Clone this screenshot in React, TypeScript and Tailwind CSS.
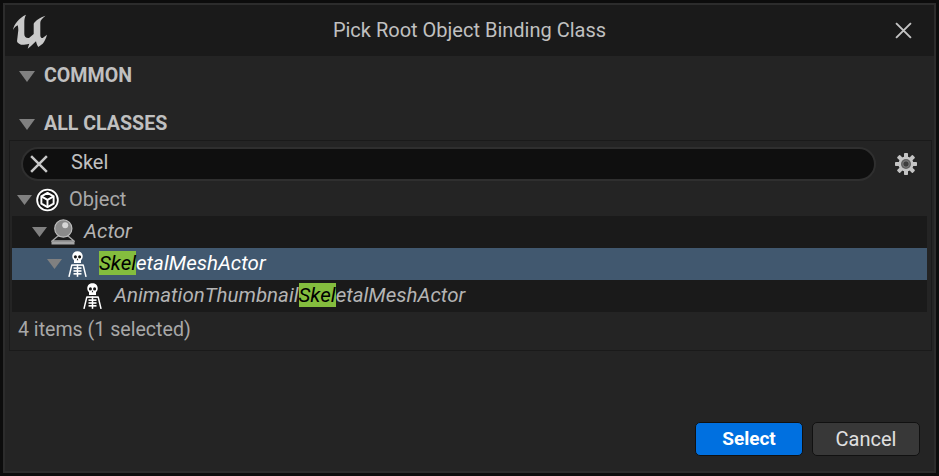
const FONT = "font-['Roboto','Liberation_Sans',sans-serif]";

const Caret = ({ big = false }: { big?: boolean }) => (
  <svg width={big ? 16 : 15} height={big ? 11 : 10} viewBox="0 0 16 10" preserveAspectRatio="none" className="shrink-0">
    <path d="M0 0H16L8 10Z" fill="#808080" />
  </svg>
);

const UnrealLogo = () => (
  <svg width="36" height="36" viewBox="11 11 36 36" className="shrink-0">
    <path
      d="M12 28C13 22 18 16 25 12.7C23.5 15.5 23.3 18 23.3 20V32C23.3 35 25.5 36.5 28 36L32.7 32V21.7C34.5 18.5 39 15.5 44.5 13.7C41 16.5 39.3 18.5 39.3 20.7V33C39.3 35.5 40.5 36.3 41.7 36L46 32.7C45 36.5 43.5 39.5 41.7 41.7L37.3 45C36 43 35.3 41 35 39.3L30 44L26.7 46.8C27 45 27.8 43.3 28.3 41.7C25 42.8 22 42.8 20 42.7C18 42 16.5 41 16 39.3L17.3 28.3C17.3 26 17 24.5 16.7 23.3C15 24 13 26 12 28Z"
      fill="#c9c9c9"
    />
  </svg>
);

const XIcon = ({ size, width, color }: { size: number; width: number; color: string }) => (
  <svg width={size} height={size} viewBox="0 0 16 16" className="shrink-0">
    <path d="M1 1L15 15M15 1L1 15" stroke={color} strokeWidth={width} fill="none" />
  </svg>
);

const GearIcon = () => (
  <svg width="22" height="22" viewBox="0 0 22 22" className="shrink-0">
    <g fill="#c4c4c4">
      {[0, 45, 90, 135, 180, 225, 270, 315].map((a) => (
        <rect key={a} x="9" y="0" width="4" height="5" rx="0.8" transform={`rotate(${a} 11 11)`} />
      ))}
    </g>
    <circle cx="11" cy="11" r="7.6" fill="#c4c4c4" />
    <circle cx="11" cy="11" r="5" fill="#5f5f5f" />
    <circle cx="11" cy="11" r="3.2" fill="#3d3d3d" stroke="#8a8a8a" strokeWidth="0.8" />
  </svg>
);

const CubeIcon = () => (
  <svg width="23" height="24" viewBox="0 0 24 24" className="shrink-0">
    <circle cx="12" cy="12" r="10.8" fill="#141414" stroke="#fff" strokeWidth="1.9" />
    <path d="M12 4.6L18.4 8.2V15.8L12 19.4L5.6 15.8V8.2Z" fill="#141414" stroke="#fff" strokeWidth="2" strokeLinejoin="round" />
    <path d="M5.6 8.2L12 11.8L18.4 8.2M12 11.8V19.4" fill="none" stroke="#fff" strokeWidth="2" />
  </svg>
);

const ActorIcon = () => (
  <svg width="24" height="26" viewBox="0 0 24 26" className="shrink-0">
    <path d="M7 17L1 22H23L17 17Z" fill="#1a1a1a" stroke="#a6a6a6" strokeWidth="1.4" />
    <rect x="0.5" y="22.5" width="23" height="3" fill="#a6a6a6" />
    <circle cx="12.3" cy="9.5" r="8.6" fill="#8a8a8a" stroke="#bdbdbd" strokeWidth="1.2" />
    <circle cx="14.2" cy="6.2" r="3" fill="#d6d6d6" />
  </svg>
);

const SkeletonIcon = () => (
  <svg width="19" height="26" viewBox="0 0 20 27" className="shrink-0">
    <path d="M4.5 5.5C4.5 2 7 0 10 0C13 0 15.5 2 15.5 5.5C15.5 7.5 14.5 8.5 13.7 9.5V12.5H6.3V9.5C5.5 8.5 4.5 7.5 4.5 5.5Z" fill="#fff" />
    <ellipse cx="7.8" cy="6" rx="1.6" ry="1.8" fill="#151515" />
    <ellipse cx="12.2" cy="6" rx="1.6" ry="1.8" fill="#151515" />
    <path d="M10 7.5L9.2 9.5H10.8Z" fill="#151515" />
    <rect x="3.5" y="13.8" width="13" height="1.7" fill="#fff" />
    <rect x="5.8" y="17" width="8.4" height="1.7" fill="#fff" />
    <rect x="5.8" y="20" width="8.4" height="1.7" fill="#fff" />
    <rect x="5.8" y="23" width="8.4" height="1.7" fill="#fff" />
    <rect x="9.2" y="14" width="1.6" height="13" fill="#fff" />
    <path d="M4 14.7L1 27M16 14.7L19 27" stroke="#fff" strokeWidth="1.6" fill="none" />
  </svg>
);

const Hit = () => <span className="bg-[#84bd3e] text-black">Skel</span>;

const Section = ({ label }: { label: string }) => (
  <div className="h-[24px] flex items-center pl-[14px] gap-[9px]">
    <Caret big />
    <span className="text-[19.6px] font-bold text-[#c0c0c0]">{label}</span>
  </div>
);

export default function App() {
  return (
    <div className={`${FONT} w-[939px] h-[476px] bg-[#0c0c0c] p-[3px]`}>
      <div className="h-full flex flex-col bg-[#242424] border-2 border-[#2c2c2c]">
        <div className="h-[51px] shrink-0 bg-[#1a1a1a] flex items-center pl-[7px] pr-[22px]">
          <UnrealLogo />
          <div className="flex-1 mr-[4px] mb-[2px] text-center text-[20px] text-[#c0c0c0]">Pick Root Object Binding Class</div>
          <XIcon size={17} width={1.8} color="#c4c4c4" />
        </div>

        <div className="flex-1 flex flex-col pt-[8px]">
          <Section label="COMMON" />
          <div className="h-[24px]" />
          <Section label="ALL CLASSES" />

          <div className="mt-[4px] ml-[4px] mr-[2px] h-[211px] border border-[#1a1a1a] flex flex-col">
            <div className="h-[40px] pt-[6px] shrink-0 flex items-center pl-[11px] pr-[14px] gap-[19px]">
              <div className="flex-1 h-[34px] rounded-full bg-[#0f0f0f] border-2 border-[#2f2f2f] flex items-center pl-[7px] gap-[23px]">
                <XIcon size={18} width={2.2} color="#c8c8c8" />
                <span className="mb-[4px] text-[20px] text-[#c0c0c0]">Skel</span>
              </div>
              <GearIcon />
            </div>

            <div className="mt-[2px] flex flex-col pl-[2px] pr-[4px] text-[20px]">
              <div className="h-[33px] flex items-center pl-[5px]">
                <Caret />
                <span className="ml-[4px]"><CubeIcon /></span>
                <span className="ml-[10px] mb-[2px] text-[#a8a8a8]">Object</span>
              </div>
              <div className="h-[32px] bg-[#1a1a1a] flex items-center pl-[20px] italic text-[20.5px]">
                <Caret />
                <span className="ml-[4px]"><ActorIcon /></span>
                <span className="ml-[9px] mb-[2px] text-[#b4b4b4]">Actor</span>
              </div>
              <div className="h-[32px] bg-[#41586f] flex items-center pl-[35px] italic text-[20.5px]">
                <Caret />
                <span className="ml-[6px]"><SkeletonIcon /></span>
                <span className="ml-[12px] mb-[2px] text-white"><Hit />etalMeshActor</span>
              </div>
              <div className="h-[32px] bg-[#1a1a1a] flex items-center pl-[71px] italic text-[20.5px]">
                <SkeletonIcon />
                <span className="ml-[12px] mb-[2px] text-[#b4b4b4]">AnimationThumbnail<Hit />etalMeshActor</span>
              </div>
            </div>

            <div className="h-[34px] pt-[2px] flex items-center pl-[8px] text-[19.6px] text-[#a8a8a8]">4 items (1 selected)</div>
          </div>

          <div className="flex-1 flex items-end justify-end gap-[9px] pr-[14px] pb-[15px]">
            <button className="w-[108px] h-[34px] rounded-[5px] bg-[#0070e0] border border-[#111] text-white text-[19px] font-bold">Select</button>
            <button className="w-[108px] h-[34px] rounded-[5px] bg-[#383838] border border-[#111] text-[#e0e0e0] text-[20px]">Cancel</button>
          </div>
        </div>
      </div>
    </div>
  );
}
